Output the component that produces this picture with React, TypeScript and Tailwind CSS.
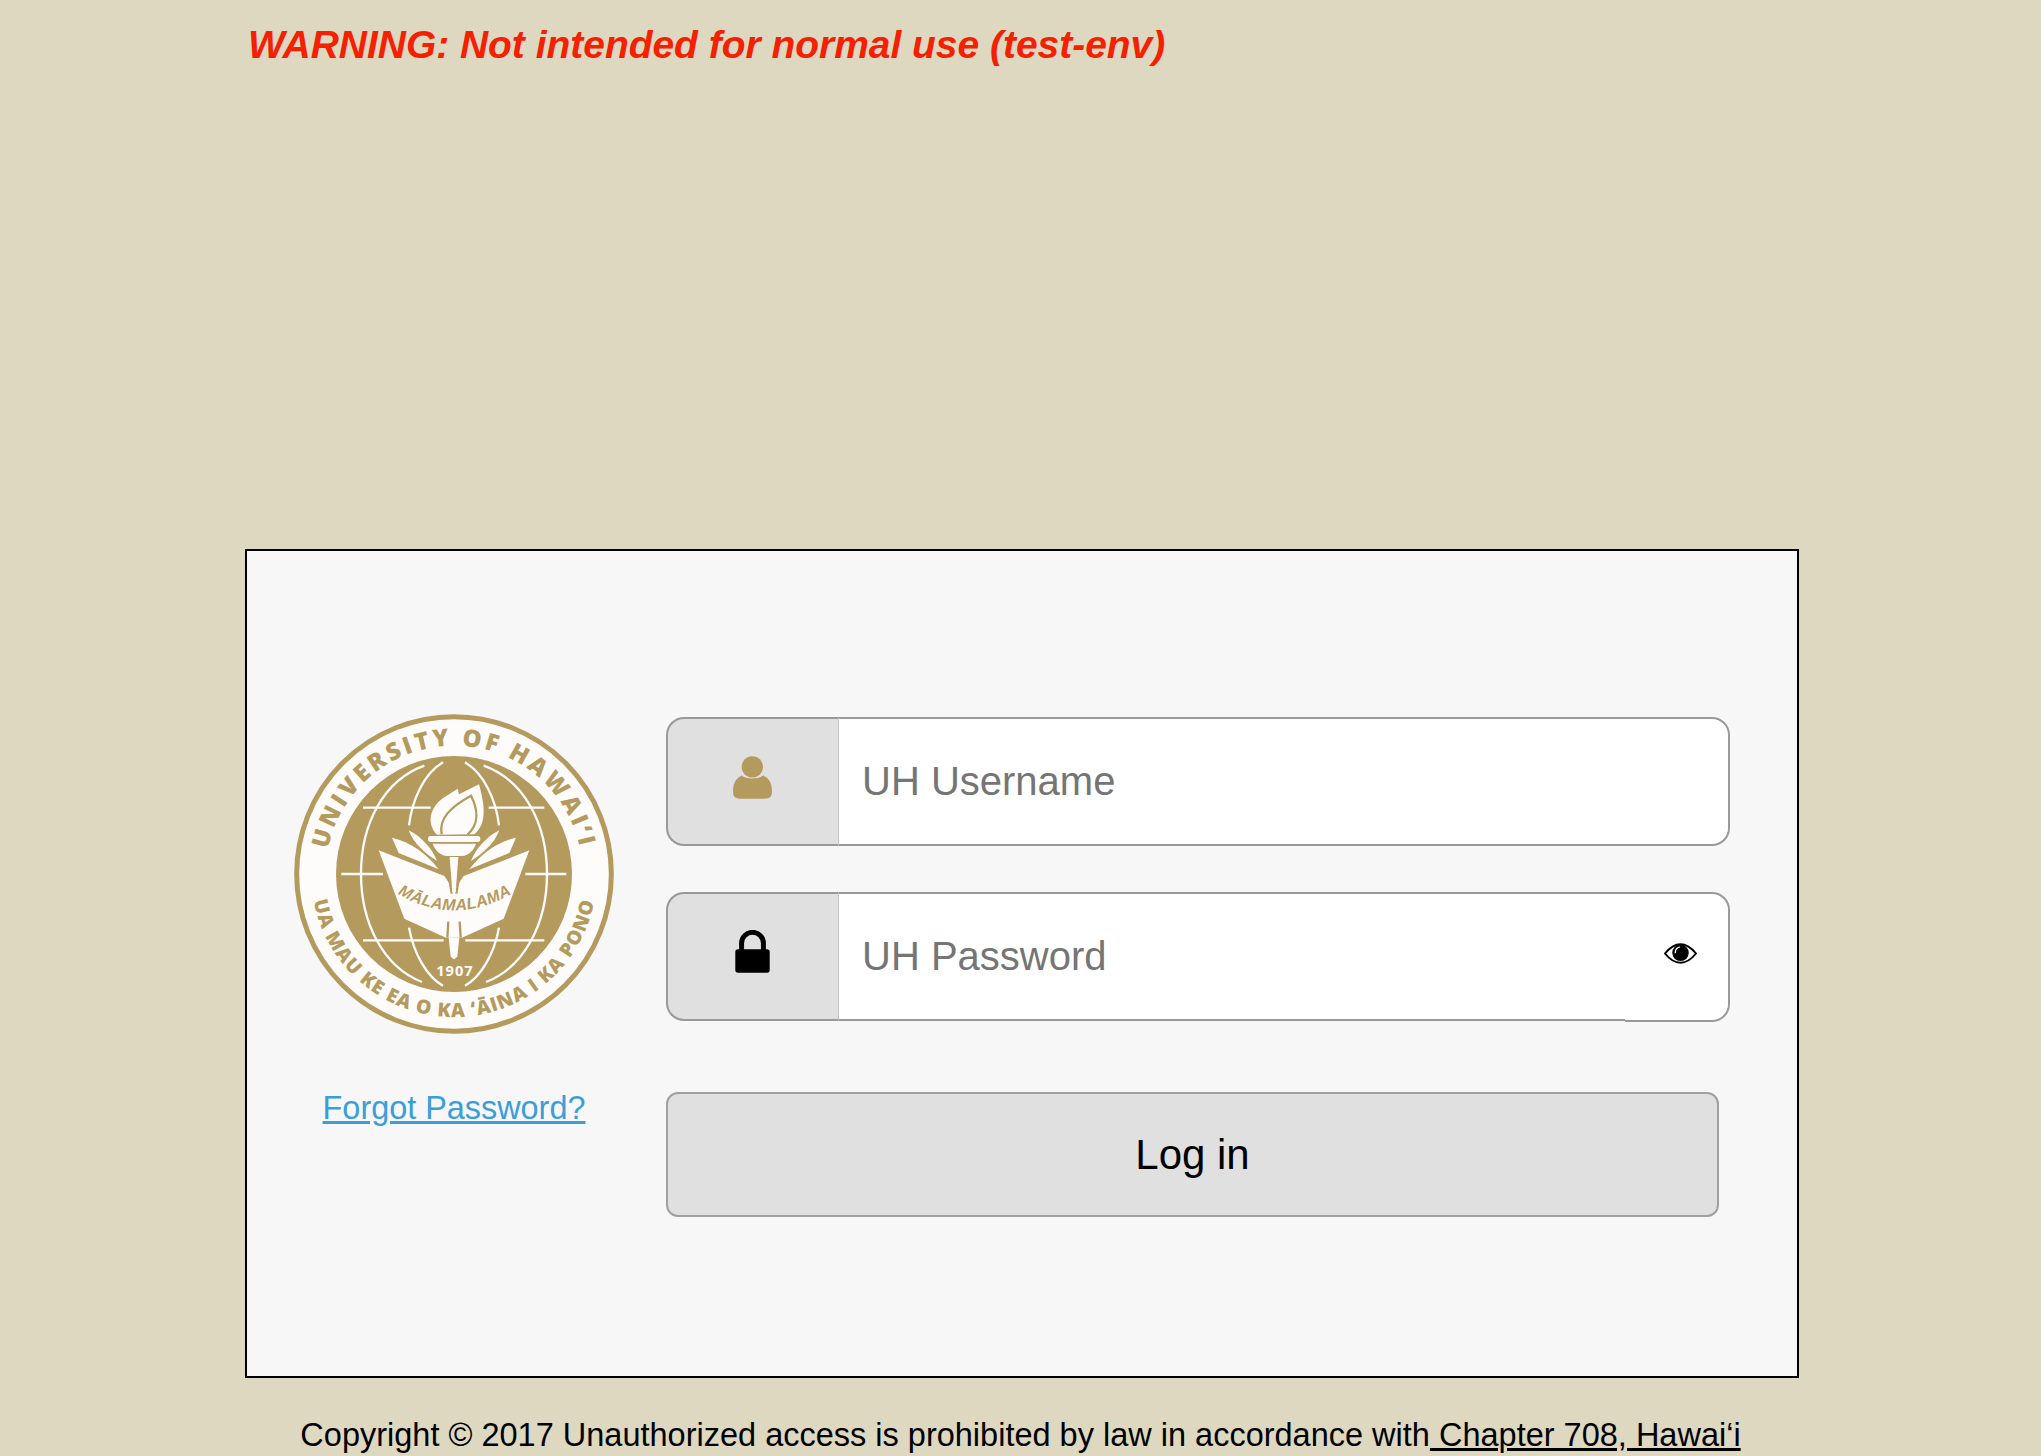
import React from 'react';

const GOLD = '#b59a5e';

function Seal() {
  return (
    <svg viewBox="71 71 960 960" className="w-[320px] h-[320px] block" aria-label="University of Hawaii seal">
      <defs>
        <path id="sealTop" d="M 166 551 A 385 385 0 0 1 936 551" />
        <path id="sealBottom" d="M 122 551 A 429 429 0 0 0 980 551" />
        <path id="sealBook" d="M 385 612 Q 551 708 722 612" />
      </defs>
      <circle cx="551" cy="551" r="472" fill="#fdfcfb" stroke={GOLD} strokeWidth="15" />
      <text fill={GOLD} fontFamily="'Open Sans', sans-serif" fontWeight="800" fontSize="72" letterSpacing="9" textAnchor="middle">
        <textPath href="#sealTop" startOffset="50%">UNIVERSITY OF HAWAI‘I</textPath>
      </text>
      <text fill={GOLD} fontFamily="'Open Sans', sans-serif" fontWeight="800" fontSize="58" letterSpacing="3" textAnchor="middle">
        <textPath href="#sealBottom" startOffset="50%">UA MAU KE EA O KA ‘ĀINA I KA PONO</textPath>
      </text>
      <circle cx="551" cy="551" r="354" fill={GOLD} />
      {/* globe lines */}
      <g fill="none" stroke="#fdfcfb" strokeWidth="7">
        <path d="M462 226 C340 270 272 400 272 551 C272 700 340 830 455 875" />
        <path d="M640 226 C762 270 830 400 830 551 C830 700 762 830 647 875" />
        <path d="M518 216 C460 250 425 330 416 405" />
        <path d="M584 216 C642 250 677 330 686 405" />
        <path d="M416 712 C430 790 470 860 518 886" />
        <path d="M686 712 C672 790 632 860 584 886" />
        <path d="M278 352 H481 M655 352 H822 M213 551 H338 M765 551 H888 M278 750 H520 M585 750 H822" />
      </g>
      {/* leaves */}
      <g fill="#fdfcfb">
        <path d="M365 442 C420 455 470 490 505 537 L385 488 Z" />
        <path d="M737 442 C682 455 632 490 597 537 L717 488 Z" />
        <path d="M415 420 C455 440 485 475 500 512 C465 490 430 460 415 420 Z" />
        <path d="M687 420 C647 440 617 475 602 512 C637 490 672 460 687 420 Z" />
        {/* book */}
        <path d="M325 480 L522 557 L551 600 L580 557 L777 480 L700 685 L575 742 H527 L402 685 Z" />
        {/* flame */}
        <path d="M500 433 C468 400 478 350 520 322 L562 295 L566 312 L626 282 C642 340 652 400 612 432 Z" />
        <rect x="473" y="437" width="157" height="18" rx="8" />
        <path d="M487 460 H617 C610 480 595 495 575 497 H530 C510 495 494 480 487 460 Z" />
        <path d="M535 742 H567 L561 798 Q551 815 541 798 Z" />
      </g>
      <g fill="none" stroke={GOLD} strokeWidth="7">
        <path d="M514 432 C505 385 540 350 602 316 C622 355 628 400 592 432" />
        <path d="M526 497 L544 610 M576 497 L558 610" />
        <path d="M534 694 L531 742 M568 694 L571 742" />
      </g>
      <path d="M538 500 H564 L556 606 H546 Z" fill="#fdfcfb" />
      <text fill={GOLD} fontFamily="'Liberation Sans', sans-serif" fontStyle="italic" fontWeight="700" fontSize="48" letterSpacing="1" textAnchor="middle">
        <textPath href="#sealBook" startOffset="50%">MĀLAMALAMA</textPath>
      </text>
      <text x="554" y="858" fill="#fdfcfb" fontFamily="'Open Sans', sans-serif" fontWeight="700" fontSize="44" letterSpacing="3" textAnchor="middle">1907</text>
    </svg>
  );
}

function UserIcon() {
  return (
    <svg viewBox="248 164 117 128" className="w-[39px] h-[43px] mb-[4px] mr-[2px]">
      <circle cx="306" cy="196" r="32" fill={GOLD} />
      <path fill={GOLD} d="M248 270 C248 245 258 228 275 222 C285 234 327 234 338 222 C355 228 365 245 365 270 Q365 292 345 292 H268 Q248 292 248 270 Z" />
    </svg>
  );
}

function LockIcon() {
  return (
    <svg viewBox="254 688 104 130" className="w-[35px] h-[43px] mb-[6px] mr-[2px]">
      <path d="M273 752 V728 A33 33 0 0 1 339 728 V752" fill="none" stroke="#000" strokeWidth="15" />
      <rect x="254" y="746" width="104" height="71" rx="8" fill="#000" />
    </svg>
  );
}

function EyeIcon() {
  return (
    <svg viewBox="0 0 100 62" className="w-[33px] h-[21px]">
      <path d="M3 31 C20 10 35 3 50 3 C65 3 80 10 97 31 C80 52 65 59 50 59 C35 59 20 52 3 31 Z" fill="none" stroke="#000" strokeWidth="6" />
      <circle cx="50" cy="29" r="25" fill="#000" />
      <path d="M34 30 C34 20 40 13 48 11" fill="none" stroke="#fff" strokeWidth="4" />
    </svg>
  );
}

function Field({ placeholder, type, icon, eye }: { placeholder: string; type: string; icon: React.ReactNode; eye?: boolean }) {
  return (
    <div className="flex items-start w-full">
      <span className="w-[173px] h-[129px] shrink-0 flex items-center justify-center pb-[5px] bg-[#e0e0e0] border-2 border-r border-[#999] border-r-[#c4c4c4] rounded-l-[18px]">
        {icon}
      </span>
      <input
        type={type}
        placeholder={placeholder}
        className={`min-w-0 flex-1 h-[129px] pl-[23px] bg-white border-y-2 border-[#999] text-[40px] text-black placeholder:text-[#757575] outline-none ${eye ? '' : 'border-r-2 rounded-r-[18px]'}`}
      />
      {eye && (
        <span className="w-[105px] h-[130px] shrink-0 flex items-center justify-end pr-[31px] pb-[7px] bg-white border-2 border-l-0 border-[#999] rounded-r-[18px]">
          <EyeIcon />
        </span>
      )}
    </div>
  );
}

export default function App() {
  return (
    <div className="h-[1456px] overflow-hidden bg-[#ded8c1] font-['Liberation_Sans',Arial,sans-serif]">
      <div className="w-[1554px] ml-[245px]">
        <h1 className="h-[549px] pt-[23px] pl-[3px] text-[38.95px] leading-[44px] font-bold italic text-[#f52000]">
          WARNING: Not intended for normal use (test-env)
        </h1>

        <div className="h-[829px] bg-[#f7f7f7] border-2 border-black flex pl-[47px] pt-[163px]">
          <div className="w-[320px] shrink-0 flex flex-col items-center">
            <Seal />
            <a href="#" className="mt-[55px] text-[32.4px] leading-[38px] underline text-[#3a9ed8]">
              Forgot Password?
            </a>
          </div>

          <div className="w-[1064px] ml-[52px] pt-[3px]">
            <Field placeholder="UH Username" type="text" icon={<UserIcon />} />
            <div className="mt-[46px]">
              <Field placeholder="UH Password" type="password" icon={<LockIcon />} eye />
            </div>
            <button className="block w-[1053px] h-[125px] mt-[70px] bg-[#e0e0e0] border-2 border-[#a0a0a0] rounded-[12px] text-[42px] text-black">
              Log in
            </button>
          </div>
        </div>
      </div>

      <p className="pt-[38px] text-center text-[32.5px] leading-[38px] text-black">
        Copyright © 2017 Unauthorized access is prohibited by law in accordance with
        <a href="#" className="underline"> Chapter 708, Hawai‘i</a>
      </p>
    </div>
  );
}
